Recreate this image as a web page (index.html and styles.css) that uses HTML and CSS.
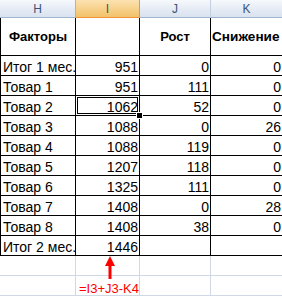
FILE: index.html
```html
<!DOCTYPE html>
<html lang="ru">
<head>
<meta charset="utf-8">
<link rel="stylesheet" href="styles.css">
</head>
<body>
<div class="sheet">
  <div class="hd">H</div>
  <div class="hd hd-sel">I</div>
  <div class="hd">J</div>
  <div class="hd">K</div>

  <div class="c first tall b">Факторы</div>
  <div class="c tall"></div>
  <div class="c tall b">Рост</div>
  <div class="c tall bl">Снижение</div>

  <div class="c first t">Итог 1 мес.</div><div class="c n">951</div><div class="c n">0</div><div class="c n">0</div>
  <div class="c first t">Товар 1</div><div class="c n">951</div><div class="c n">111</div><div class="c n">0</div>
  <div class="c first t">Товар 2</div><div class="c n sel">1062<span class="handle"></span></div><div class="c n">52</div><div class="c n">0</div>
  <div class="c first t">Товар 3</div><div class="c n">1088</div><div class="c n">0</div><div class="c n">26</div>
  <div class="c first t">Товар 4</div><div class="c n">1088</div><div class="c n">119</div><div class="c n">0</div>
  <div class="c first t">Товар 5</div><div class="c n">1207</div><div class="c n">118</div><div class="c n">0</div>
  <div class="c first t">Товар 6</div><div class="c n">1325</div><div class="c n">111</div><div class="c n">0</div>
  <div class="c first t">Товар 7</div><div class="c n">1408</div><div class="c n">0</div><div class="c n">28</div>
  <div class="c first t">Товар 8</div><div class="c n">1408</div><div class="c n">38</div><div class="c n">0</div>
  <div class="c first t">Итог 2 мес.</div><div class="c n">1446</div><div class="c"></div><div class="c"></div>

  <div class="g"></div><div class="g"></div><div class="g"></div><div class="g"></div>
  <div class="g"></div><div class="g"></div><div class="g"></div><div class="g"></div>

  <div class="note">
    <svg class="arrow" width="12" height="23" viewBox="0 0 12 23"><polygon points="6,0 11,10 7.5,10 7.5,23 4.5,23 4.5,10 1,10" fill="#ff0000"/></svg>
    <span class="formula">=I3+J3-K4</span>
  </div>
</div>
</body>
</html>
```
FILE: styles.css
```css
html, body {
  margin: 0;
  padding: 0;
  background: #fff;
  overflow: hidden;
}
.sheet {
  position: relative;
  display: grid;
  grid-template-columns: 76px 64px 71px 72px;
  grid-auto-rows: 20px;
  grid-template-rows: 18px 38px;
  font-family: "Liberation Sans", Arial, sans-serif;
  font-size: 14px;
  color: #000;
  width: 282px;
  overflow: hidden;
}
.hd {
  box-sizing: border-box;
  background: linear-gradient(#f6f9fc, #e3eaf4 60%, #d9e2ef);
  border-right: 1px solid #c4d0e0;
  border-bottom: 1px solid #9eb6ce;
  color: #3b5478;
  font-size: 12px;
  display: flex;
  align-items: center;
  justify-content: center;
}
.hd:first-child { border-right-color: #f0a848; }
.hd-sel {
  background: linear-gradient(#fbe2b1, #f7d089 55%, #f2c26a);
  border-right: 1px solid #f29536;
  border-bottom: 1px solid #f29536;
  color: #2b5c62;
}
.c {
  box-sizing: border-box;
  border-right: 1px solid #000;
  border-bottom: 1px solid #000;
  display: flex;
  align-items: flex-end;
  line-height: 16px;
  padding: 0 2px;
  white-space: nowrap;
}
.first { border-left: 1px solid #000; }
.t { justify-content: flex-start; }
.n { justify-content: flex-end; padding-right: 1px; }
.tall { align-items: center; }
.b { font-weight: bold; justify-content: center; font-size: 13px; }
.bl { font-weight: bold; justify-content: flex-start; font-size: 13.6px; padding-left: 1px; overflow: visible; }
.sel { position: relative; }
.sel::before {
  content: "";
  position: absolute;
  left: -1px;
  top: -1px;
  right: -1px;
  bottom: -1px;
  border: 3px double #000;
  pointer-events: none;
}
.handle {
  position: absolute;
  right: -4px;
  bottom: -4px;
  width: 5px;
  height: 5px;
  background: #000;
  border: 1px solid #fff;
  z-index: 2;
}
.g {
  box-sizing: border-box;
  border-right: 1px solid #d0d7e5;
  border-bottom: 1px solid #d0d7e5;
}
.note {
  position: absolute;
  left: 76px;
  top: 256px;
  width: 70px;
  display: flex;
  flex-direction: column;
  align-items: flex-start;
}
.arrow { margin-left: 28px; display: block; }
.formula {
  color: #ff0000;
  font-size: 13px;
  line-height: 16px;
  margin-left: 3px;
  margin-top: 2px;
}
```
